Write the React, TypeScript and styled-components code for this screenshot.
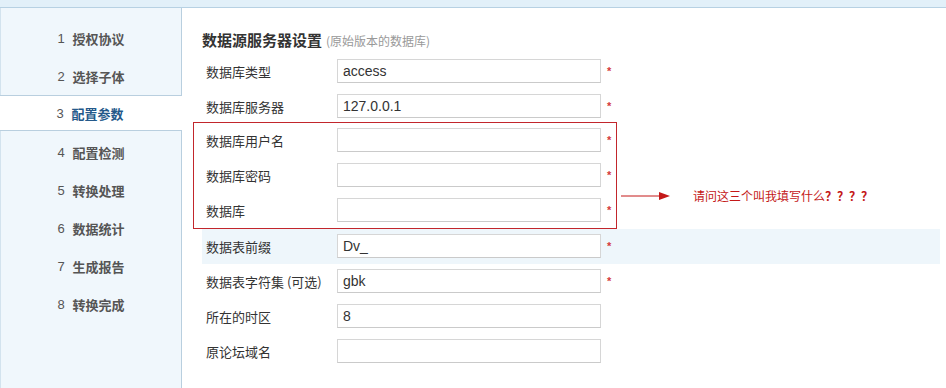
import React from 'react';
import styled, { createGlobalStyle } from 'styled-components';

const GlobalStyle = createGlobalStyle`
  html, body {
    margin: 0;
    padding: 0;
    background: #ffffff;
    font-family: "Liberation Sans", "Noto Sans CJK SC", sans-serif;
  }
`;

const Page = styled.div`
  width: 946px;
  height: 388px;
  display: flex;
  flex-direction: column;
  overflow: hidden;
`;

const TopBar = styled.div`
  height: 7px;
  flex-shrink: 0;
  background: #e2f0f9;
  border-bottom: 1px solid #b7d1e3;
`;

const Body = styled.div`
  flex: 1;
  display: flex;
  min-height: 0;
`;

const Sidebar = styled.ul`
  width: 180px;
  flex-shrink: 0;
  margin: 0;
  padding: 11px 0 0;
  list-style: none;
  background: #f0f7fc;
  border-left: 1px solid #d3e3ee;
  border-right: 1px solid #b9cfdf;
`;

const Step = styled.li<{ $active?: boolean }>`
  display: flex;
  justify-content: center;
  align-items: center;
  height: ${(p) => (p.$active ? '34px' : '38px')};
  font: bold 13px "Noto Sans CJK SC", sans-serif;
  color: ${(p) => (p.$active ? '#24598a' : '#555555')};
  ${(p) =>
    p.$active &&
    `
    background: #ffffff;
    border-top: 1px solid #b9cfdf;
    border-bottom: 1px solid #b9cfdf;
    margin: 0 -1px 2px -1px;
    padding-right: 2px;
  `}
`;

const StepNo = styled.span`
  font: 13px "Liberation Sans", sans-serif;
  color: #555555;
  margin-right: 8px;
`;

const Main = styled.div`
  flex: 1;
  padding: 21px 6px 0 20px;
`;

const Title = styled.h2`
  margin: 0 0 1px;
  height: 24px;
  line-height: 24px;
  font: bold 15px "Noto Sans CJK SC", sans-serif;
  color: #333333;
`;

const SubTitle = styled.span`
  font: normal 12px "Noto Sans CJK SC", sans-serif;
  color: #999999;
  margin-left: 4px;
`;

const Row = styled.div<{ $hl?: boolean }>`
  display: flex;
  align-items: center;
  height: 35px;
  padding: 0 0 1px 4px;
  box-sizing: border-box;
  background: ${(p) => (p.$hl ? '#eef6fb' : 'transparent')};
`;

const Label = styled.div`
  width: 131px;
  flex-shrink: 0;
  font: 13px "Noto Sans CJK SC", sans-serif;
  color: #333333;
`;

const Input = styled.input`
  width: 264px;
  height: 24px;
  box-sizing: border-box;
  margin: 0;
  padding: 0 5px;
  border: 1px solid #d6d6d6;
  border-bottom-color: #cacaca;
  background: #ffffff;
  font: 14px "Liberation Sans", sans-serif;
  color: #333333;
  outline: none;
`;

const Star = styled.span`
  margin-left: 6px;
  font: bold 11px "Liberation Sans", sans-serif;
  color: #d43a3a;
`;

const Marked = styled.div`
  display: flex;
  align-items: flex-start;
  margin: -2px 0 0 -9px;
`;

const RedBox = styled.div`
  width: 414px;
  padding-left: 8px;
  border: 1px solid #c2262c;
`;

const Note = styled.div`
  display: flex;
  align-items: center;
  padding-top: 65px;
  margin-left: 4px;
`;

const NoteText = styled.span`
  margin-left: 22px;
  font: 12px "Noto Sans CJK SC", sans-serif;
  color: #c41818;
`;

const Ask = styled.b`
  font-weight: bold;
`;

const Arrow = () => (
  <svg width="50" height="10" viewBox="0 0 50 10">
    <line x1="0" y1="5" x2="40" y2="5" stroke="#c41818" strokeWidth="1" />
    <polygon points="38,1 49,5 38,9" fill="#c41818" />
  </svg>
);

const steps = ['授权协议', '选择子体', '配置参数', '配置检测', '转换处理', '数据统计', '生成报告', '转换完成'];

type Field = { label: string; value: string; required: boolean };

const FieldRow = ({ f, hl }: { f: Field; hl?: boolean }) => (
  <Row $hl={hl}>
    <Label>{f.label}</Label>
    <Input defaultValue={f.value} />
    {f.required && <Star>*</Star>}
  </Row>
);

const top: Field[] = [
  { label: '数据库类型', value: 'access', required: true },
  { label: '数据库服务器', value: '127.0.0.1', required: true },
];

const boxed: Field[] = [
  { label: '数据库用户名', value: '', required: true },
  { label: '数据库密码', value: '', required: true },
  { label: '数据库', value: '', required: true },
];

const rest: Field[] = [
  { label: '数据表前缀', value: 'Dv_', required: true },
  { label: '数据表字符集 (可选)', value: 'gbk', required: true },
  { label: '所在的时区', value: '8', required: false },
  { label: '原论坛域名', value: '', required: false },
];

export default function App() {
  return (
    <Page>
      <GlobalStyle />
      <TopBar />
      <Body>
        <Sidebar>
          {steps.map((s, i) => (
            <Step key={s} $active={i === 2}>
              <StepNo>{i + 1}</StepNo>
              {s}
            </Step>
          ))}
        </Sidebar>
        <Main>
          <Title>
            数据源服务器设置<SubTitle>(原始版本的数据库)</SubTitle>
          </Title>
          {top.map((f) => (
            <FieldRow key={f.label} f={f} />
          ))}
          <Marked>
            <RedBox>
              {boxed.map((f) => (
                <FieldRow key={f.label} f={f} />
              ))}
            </RedBox>
            <Note>
              <Arrow />
              <NoteText>
                请问这三个叫我填写什么<Ask>？？？？</Ask>
              </NoteText>
            </Note>
          </Marked>
          {rest.map((f, i) => (
            <FieldRow key={f.label} f={f} hl={i === 0} />
          ))}
        </Main>
      </Body>
    </Page>
  );
}
